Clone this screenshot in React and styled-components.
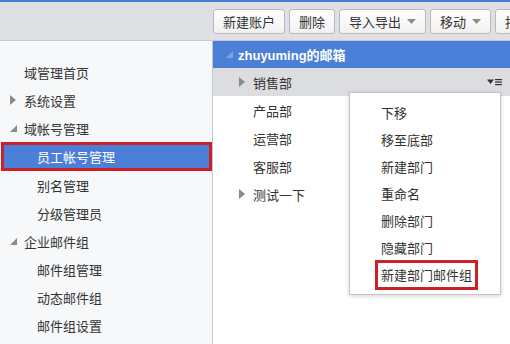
import React from 'react';
import styled, { createGlobalStyle } from 'styled-components';

const GlobalStyle = createGlobalStyle`
  html, body {
    margin: 0;
    padding: 0;
    background: #ffffff;
  }
  body {
    font-family: "Liberation Sans", "Noto Sans CJK SC", sans-serif;
    font-size: 13px;
    color: #333;
  }
`;

const sideItems = [
  { label: '域管理首页', level: 1 },
  { label: '系统设置', level: 1, arrow: 'closed' },
  { label: '域帐号管理', level: 1, arrow: 'open' },
  { label: '员工帐号管理', level: 2, active: true },
  { label: '别名管理', level: 2 },
  { label: '分级管理员', level: 2 },
  { label: '企业邮件组', level: 1, arrow: 'open' },
  { label: '邮件组管理', level: 2 },
  { label: '动态邮件组', level: 2 },
  { label: '邮件组设置', level: 2 },
];

const depts = [
  { label: '产品部' },
  { label: '运营部' },
  { label: '客服部' },
  { label: '测试一下', arrow: true },
];

const menuItems = ['下移', '移至底部', '新建部门', '重命名', '删除部门', '隐藏部门', '新建部门邮件组'];

const ClosedArrow = () => (
  <svg width="6" height="10" viewBox="0 0 6 10">
    <path d="M0 0 L6 5 L0 10 Z" fill="#8a8a8a" />
  </svg>
);

const OpenArrow = ({ color = '#8a8a8a' }) => (
  <svg width="7" height="7" viewBox="0 0 7 7">
    <path d="M7 0 L7 7 L0 7 Z" fill={color} />
  </svg>
);

const Caret = () => (
  <svg width="9" height="5" viewBox="0 0 9 5">
    <path d="M0 0 L9 0 L4.5 5 Z" fill="#8c8c8c" />
  </svg>
);

const RowMenuIcon = () => (
  <svg width="15" height="8" viewBox="0 0 15 8">
    <path d="M0 1.5 L7 1.5 L3.5 6 Z" fill="#333" />
    <rect x="8" y="1" width="7" height="1.2" fill="#333" />
    <rect x="8" y="3.5" width="7" height="1.2" fill="#333" />
    <rect x="8" y="6" width="7" height="1.2" fill="#333" />
  </svg>
);

const App = () => {
  return (
    <Page>
      <GlobalStyle />
      <TopStrip />
      <Toolbar>
        <Button>新建账户</Button>
        <Button>删除</Button>
        <Button>导入导出 <Caret /></Button>
        <Button>移动 <Caret /></Button>
        <Button>批量</Button>
      </Toolbar>
      <Body>
        <Sidebar>
          {sideItems.map((item) => (
            <SideItem key={item.label} $level={item.level} $active={item.active}>
              {item.level === 1 && (
                <ArrowSlot>
                  {item.arrow === 'closed' && <ClosedArrow />}
                  {item.arrow === 'open' && <OpenArrow />}
                </ArrowSlot>
              )}
              {item.label}
            </SideItem>
          ))}
        </Sidebar>
        <Main>
          <TreeHeader>
            <OpenArrow color="#7fa2e0" />
            <span>zhuyuming的邮箱</span>
          </TreeHeader>
          <DeptRow $hover>
            <ArrowSlot><ClosedArrow /></ArrowSlot>
            <DeptLabel>销售部</DeptLabel>
            <RowMenuIcon />
          </DeptRow>
          {depts.map((d) => (
            <DeptRow key={d.label}>
              <ArrowSlot>{d.arrow && <ClosedArrow />}</ArrowSlot>
              <DeptLabel>{d.label}</DeptLabel>
            </DeptRow>
          ))}
          <Menu>
            {menuItems.map((m, i) => (
              <MenuItem key={m}>
                <MenuText $marked={i === menuItems.length - 1}>{m}</MenuText>
              </MenuItem>
            ))}
          </Menu>
        </Main>
      </Body>
    </Page>
  );
};

const Page = styled.div`
  width: 510px;
  height: 344px;
  display: flex;
  flex-direction: column;
  overflow: hidden;
`;

const TopStrip = styled.div`
  height: 2px;
  background: #4a7dd6;
`;

const Toolbar = styled.div`
  height: 39px;
  box-sizing: border-box;
  background: #dfe0e4;
  border-bottom: 1px solid #c9cace;
  display: flex;
  align-items: flex-start;
  padding: 7px 0 0 213px;
  gap: 4px;
  overflow: hidden;
`;

const Button = styled.div`
  height: 25px;
  box-sizing: border-box;
  padding: 0 9px;
  display: flex;
  align-items: center;
  gap: 6px;
  flex-shrink: 0;
  border: 1px solid #b9babd;
  border-radius: 3px;
  background: linear-gradient(#ffffff, #f1f1f2);
  color: #333;
  font-size: 13px;
  white-space: nowrap;
`;

const Body = styled.div`
  flex: 1;
  display: flex;
`;

const Sidebar = styled.div`
  width: 213px;
  flex-shrink: 0;
  background: #f7f8fa;
  border-right: 1px solid #c6c7ca;
  padding-top: 17px;
  box-sizing: border-box;
`;

const SideItem = styled.div`
  height: 28px;
  display: flex;
  align-items: center;
  box-sizing: border-box;
  padding-left: ${(p) => (p.$level === 2 ? 37 : 10)}px;
  color: ${(p) => (p.$active ? '#ffffff' : '#333')};
  background: ${(p) => (p.$active ? '#4b7fd8' : 'transparent')};
  ${(p) =>
    p.$active &&
    `
    margin: 0 0 0 1px;
    border: 3px solid #cc1f26;
    padding-left: 33px;
    height: 29px;
  `}
`;

const ArrowSlot = styled.span`
  width: 14px;
  flex-shrink: 0;
  display: flex;
  align-items: center;
`;

const Main = styled.div`
  flex: 1;
  position: relative;
  background: #ffffff;
`;

const TreeHeader = styled.div`
  height: 27px;
  background: #4b7fd8;
  display: flex;
  align-items: center;
  gap: 5px;
  padding-left: 13px;
  color: #ffffff;
  font-weight: bold;
  font-size: 13px;
`;

const DeptRow = styled.div`
  height: 28px;
  display: flex;
  align-items: center;
  padding: 0 8px 0 26px;
  background: ${(p) => (p.$hover ? '#dcdde1' : 'transparent')};
`;

const DeptLabel = styled.span`
  flex: 1;
`;

const Menu = styled.div`
  position: absolute;
  left: 136px;
  top: 51px;
  width: 152px;
  box-sizing: border-box;
  padding: 6px 0 6px 25px;
  background: #ffffff;
  border: 1px solid #c4c4c4;
  box-shadow: 0 1px 4px rgba(0, 0, 0, 0.18);
`;

const MenuItem = styled.div`
  height: 27px;
  display: flex;
  align-items: center;
`;

const MenuText = styled.span`
  display: inline-flex;
  align-items: center;
  box-sizing: border-box;
  padding: ${(p) => (p.$marked ? '0 3px 0 3px' : '0 0 0 6px')};
  height: ${(p) => (p.$marked ? '30px' : 'auto')};
  border: ${(p) => (p.$marked ? '3px solid #cc1f26' : 'none')};
`;

export default App;
